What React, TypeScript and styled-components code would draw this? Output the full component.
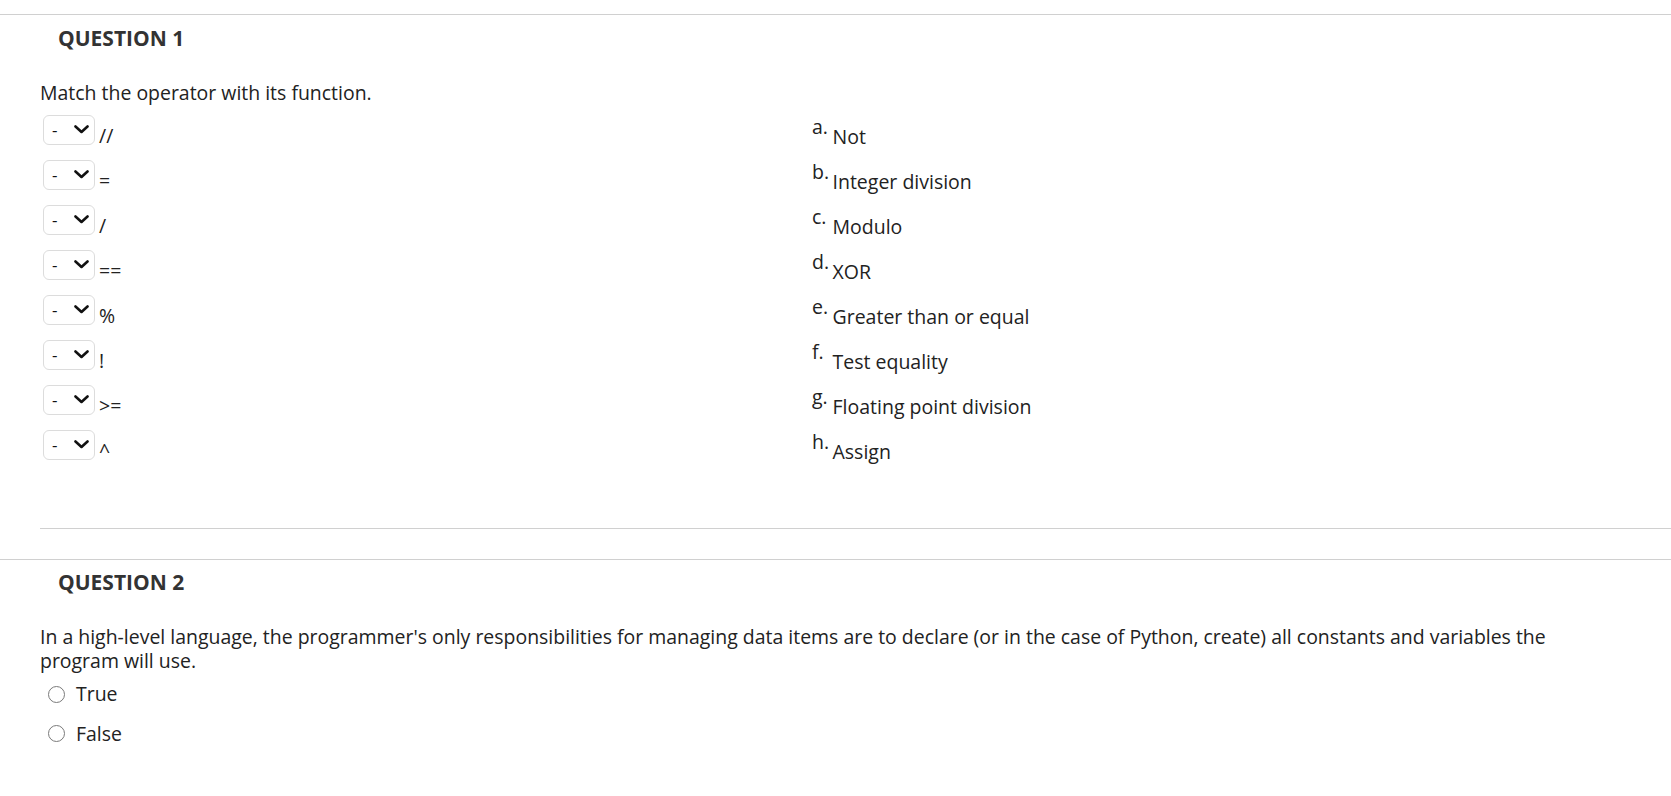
import React from "react";
import styled, { createGlobalStyle } from "styled-components";

const GlobalStyle = createGlobalStyle`
  body {
    margin: 0;
    background: #fff;
    font-family: "Open Sans", "Liberation Sans", sans-serif;
    color: #222;
  }
`;

type Pair = { op: string; letter: string; answer: string };

const pairs: Pair[] = [
  { op: "//", letter: "a.", answer: "Not" },
  { op: "=", letter: "b.", answer: "Integer division" },
  { op: "/", letter: "c.", answer: "Modulo" },
  { op: "==", letter: "d.", answer: "XOR" },
  { op: "%", letter: "e.", answer: "Greater than or equal" },
  { op: "!", letter: "f.", answer: "Test equality" },
  { op: ">=", letter: "g.", answer: "Floating point division" },
  { op: "^", letter: "h.", answer: "Assign" },
];

const Page = styled.div`
  padding-top: 14px;
  padding-bottom: 40px;
`;

const Question = styled.section<{ $gap?: number }>`
  border-top: 1px solid #d0d0d0;
  padding-top: 8.5px;
  margin-top: ${({ $gap }) => $gap ?? 0}px;
`;

const Heading = styled.h2`
  margin: 0 0 0 58px;
  font-size: 21px;
  line-height: 28px;
  font-weight: 700;
  color: #333;
`;

const Body = styled.div`
  padding: 29px 80px 0 40px;
`;

const Prompt = styled.p`
  margin: 0;
  font-size: 19.47px;
  line-height: 24px;
  color: #222;
`;

const MatchGrid = styled.div`
  margin-top: 10px;
  display: grid;
  grid-template-columns: 772px 1fr;
  grid-auto-rows: 30px;
  row-gap: 15px;
`;

const OpCell = styled.div`
  display: flex;
  align-items: flex-end;
  gap: 4px;
  padding-left: 3px;
`;

const SelectBox = styled.div`
  box-sizing: border-box;
  width: 52px;
  height: 30px;
  border: 1px solid #dcdcdc;
  border-radius: 6px;
  display: flex;
  align-items: center;
  justify-content: space-between;
  padding: 0 5px 0 8px;
  font-size: 17px;
  color: #111;
  background: #fff;
`;

const Operator = styled.span`
  font-size: 19.5px;
  line-height: 19px;
  color: #222;
`;

const AnswerCell = styled.div`
  display: flex;
  align-items: flex-end;
`;

const Letter = styled.span`
  width: 20.5px;
  flex: none;
  font-size: 19.5px;
  line-height: 19px;
  margin-bottom: 9px;
  color: #222;
`;

const AnswerText = styled.span`
  font-size: 19.5px;
  line-height: 19px;
  margin-bottom: -1px;
  color: #222;
`;

const Divider = styled.hr`
  margin: 68px -80px 0 0;
  border: none;
  border-top: 1px solid #d0d0d0;
`;

const Options = styled.div`
  margin-top: 9px;
  display: flex;
  flex-direction: column;
  gap: 15.5px;
  padding-left: 8px;
`;

const Option = styled.label`
  display: flex;
  align-items: center;
  gap: 11px;
  font-size: 19.47px;
  line-height: 24px;
  color: #222;
`;

const Radio = styled.span`
  box-sizing: border-box;
  width: 17px;
  height: 17px;
  border-radius: 50%;
  border: 1.5px solid #7a7a7a;
  background: #fff;
  flex: none;
`;

const Chevron = () => (
  <svg width="15" height="9" viewBox="0 0 15 9">
    <polyline
      points="1.5,1.5 7.5,7 13.5,1.5"
      fill="none"
      stroke="#111"
      strokeWidth="2.6"
      strokeLinecap="round"
      strokeLinejoin="round"
    />
  </svg>
);

export default function App() {
  return (
    <Page>
      <GlobalStyle />
      <Question>
        <Heading>QUESTION 1</Heading>
        <Body>
          <Prompt>Match the operator with its function.</Prompt>
          <MatchGrid>
            {pairs.map((p) => (
              <React.Fragment key={p.letter}>
                <OpCell>
                  <SelectBox>
                    <span>-</span>
                    <Chevron />
                  </SelectBox>
                  <Operator>{p.op}</Operator>
                </OpCell>
                <AnswerCell>
                  <Letter>{p.letter}</Letter>
                  <AnswerText>{p.answer}</AnswerText>
                </AnswerCell>
              </React.Fragment>
            ))}
          </MatchGrid>
          <Divider />
        </Body>
      </Question>
      <Question $gap={30}>
        <Heading>QUESTION 2</Heading>
        <Body>
          <Prompt>
            In a high-level language, the programmer's only responsibilities for
            managing data items are to declare (or in the case of Python, create)
            all constants and variables the program will use.
          </Prompt>
          <Options>
            <Option>
              <Radio />
              True
            </Option>
            <Option>
              <Radio />
              False
            </Option>
          </Options>
        </Body>
      </Question>
    </Page>
  );
}
